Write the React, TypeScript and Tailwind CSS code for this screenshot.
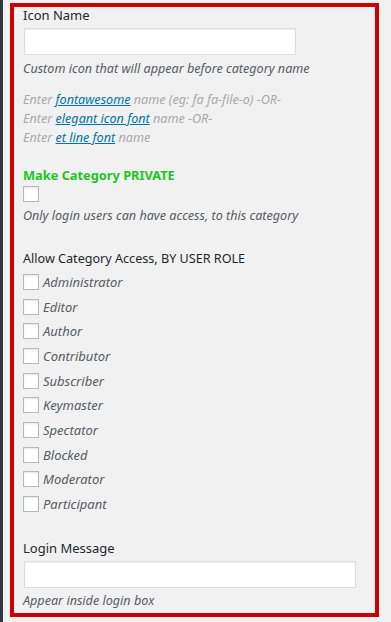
import React from "react";

const roles = [
  "Administrator",
  "Editor",
  "Author",
  "Contributor",
  "Subscriber",
  "Keymaster",
  "Spectator",
  "Blocked",
  "Moderator",
  "Participant",
];

function Box() {
  return (
    <span className="block w-[16px] h-[16px] shrink-0 border border-[#b4b9be] bg-white shadow-[inset_0_1px_2px_rgba(0,0,0,0.1)]" />
  );
}

export default function App() {
  return (
    <div
      className="w-[391px] h-[622px] bg-[#f1f1f1] border-l-[3px] border-[#32373c] pl-[7px] pt-[3px] text-[12.6px] text-[#23282d] overflow-hidden"
      style={{ fontFamily: '"Noto Sans", "Open Sans", sans-serif' }}
    >
      <div className="w-[369px] h-[614px] border-4 border-[#cc0000] pl-[9px] flex flex-col">
        <div className="leading-[16px] text-[13px]">Icon Name</div>
        <div className="mt-[5px] ml-[1px] w-[272px] h-[27px] bg-white border border-[#dddddd] shadow-[inset_0_1px_2px_rgba(0,0,0,0.07)]" />
        <div className="mt-[4px] leading-[19px] italic text-[#555d66]">
          Custom icon that will appear before category name
        </div>
        <div className="mt-[12px] leading-[19px] italic text-[#a7aaad]">
          <div>
            Enter <a className="text-[#0073aa] underline">fontawesome</a> name (eg: fa fa-file-o) -OR-
          </div>
          <div>
            Enter <a className="text-[#0073aa] underline">elegant icon font</a> name -OR-
          </div>
          <div>
            Enter <a className="text-[#0073aa] underline">et line font</a> name
          </div>
        </div>
        <div className="mt-[19px] leading-[19px] font-bold text-[12.8px] text-[#1ec41e]">
          Make Category PRIVATE
        </div>
        <div className="mt-[1px]">
          <Box />
        </div>
        <div className="mt-[4px] leading-[19px] italic text-[#555d66]">
          Only login users can have access, to this category
        </div>
        <div className="mt-[24px] leading-[19px]">Allow Category Access, BY USER ROLE</div>
        <div className="mt-[6px] flex flex-col">
          {roles.map((r) => (
            <div key={r} className="h-[24.67px] flex items-start gap-[4px]">
              <Box />
              <span className="leading-[16px] text-[13px] italic text-[#555d66]">{r}</span>
            </div>
          ))}
        </div>
        <div className="mt-[18px] leading-[19px] text-[13px]">Login Message</div>
        <div className="mt-[3px] ml-[1px] w-[332px] h-[27px] bg-white border border-[#dddddd] shadow-[inset_0_1px_2px_rgba(0,0,0,0.07)]" />
        <div className="mt-[3px] leading-[19px] italic text-[#555d66]">Appear inside login box</div>
      </div>
    </div>
  );
}
